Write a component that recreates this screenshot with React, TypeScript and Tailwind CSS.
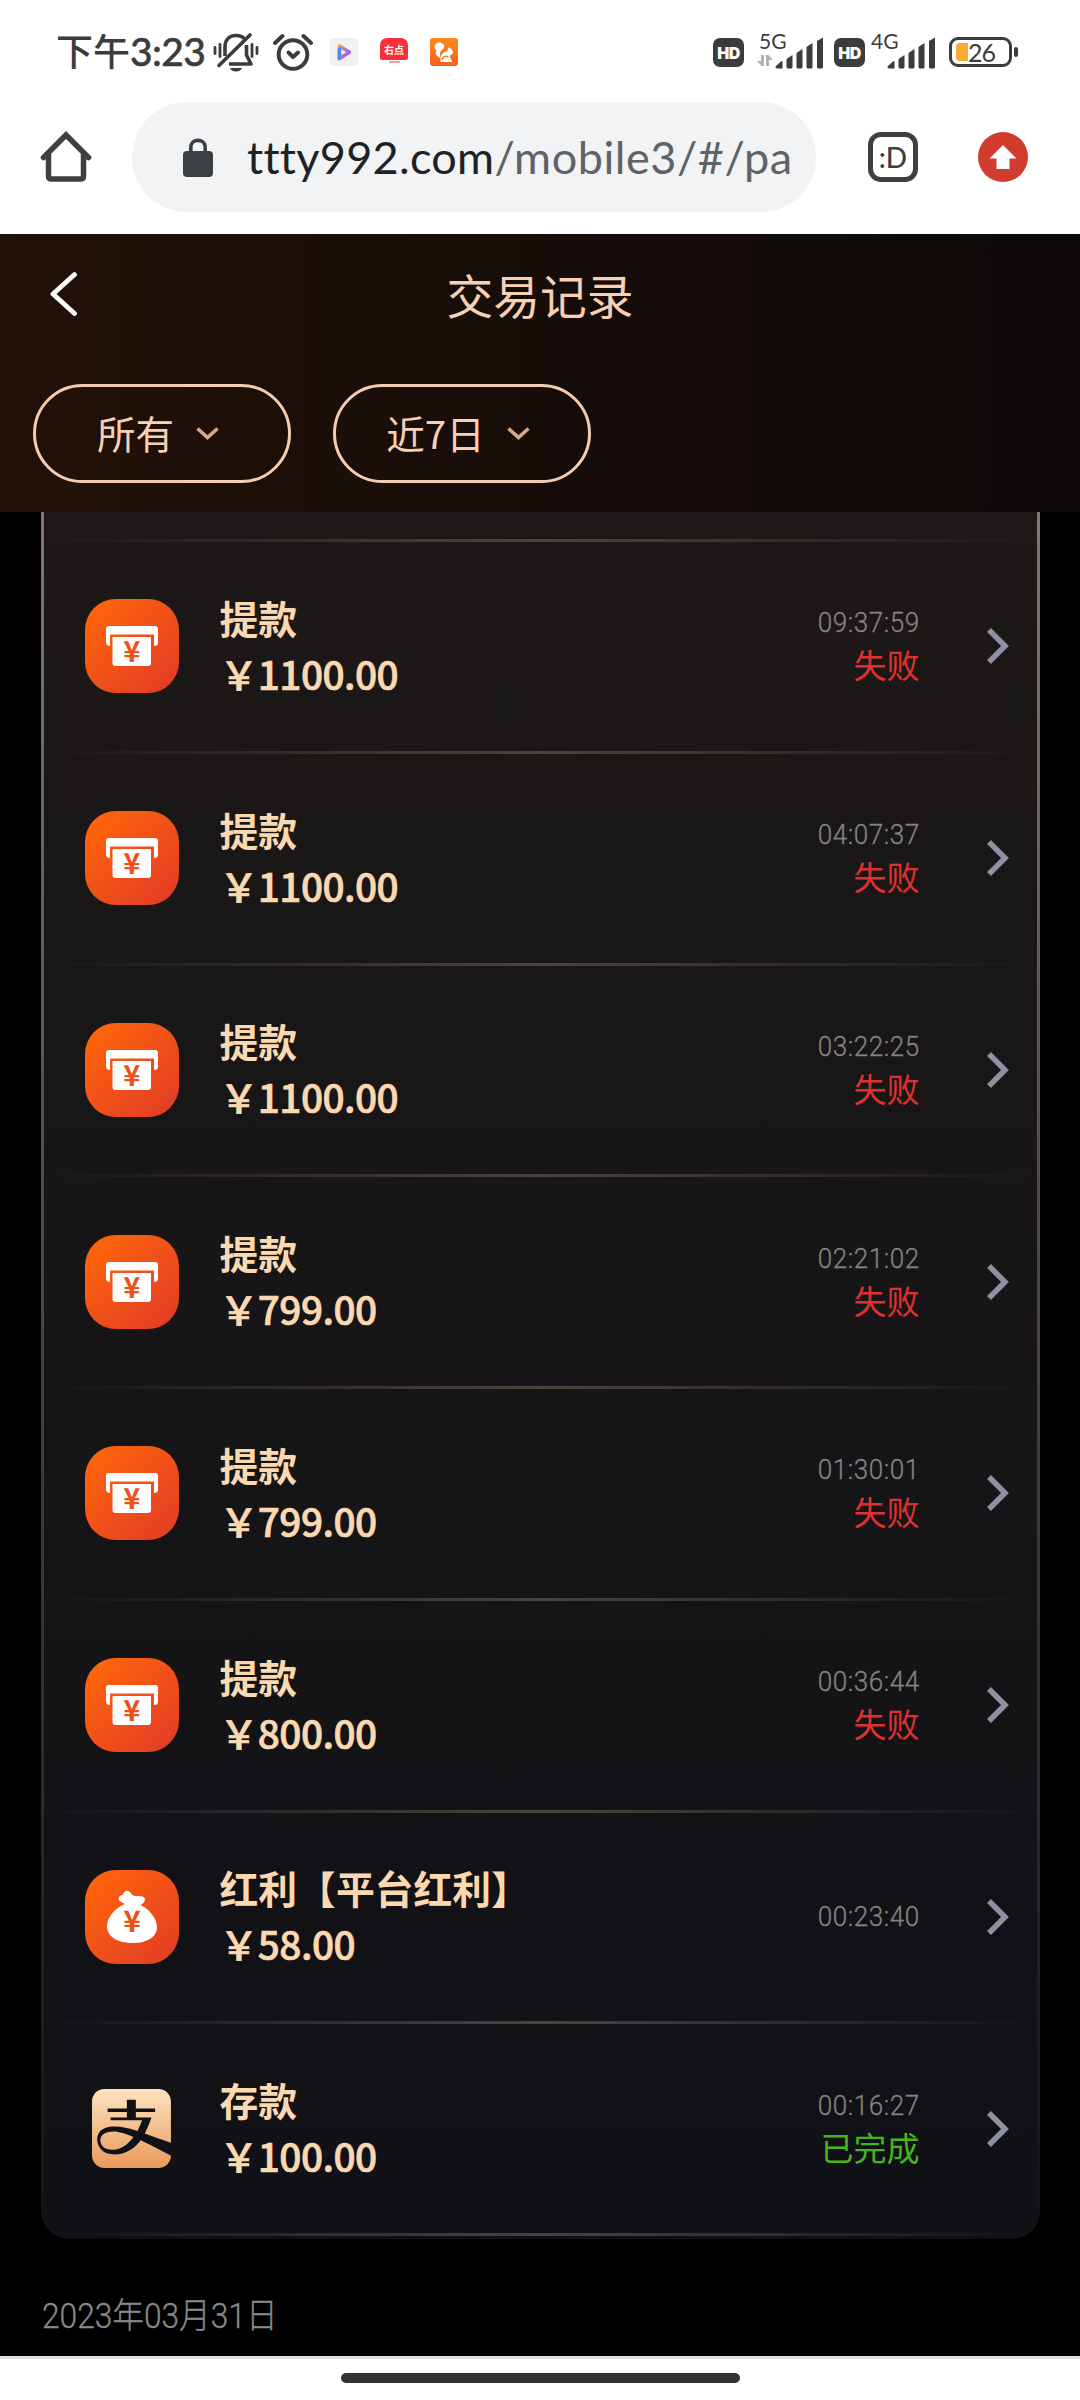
import { FaAlipay } from "react-icons/fa";

type RecordItem = {
  kind: "withdraw" | "bonus" | "deposit";
  title: string;
  amount: string;
  time: string;
  status?: "失败" | "已完成";
};

const records: RecordItem[] = [
  { kind: "withdraw", title: "提款", amount: "1100.00", time: "09:37:59", status: "失败" },
  { kind: "withdraw", title: "提款", amount: "1100.00", time: "04:07:37", status: "失败" },
  { kind: "withdraw", title: "提款", amount: "1100.00", time: "03:22:25", status: "失败" },
  { kind: "withdraw", title: "提款", amount: "799.00", time: "02:21:02", status: "失败" },
  { kind: "withdraw", title: "提款", amount: "799.00", time: "01:30:01", status: "失败" },
  { kind: "withdraw", title: "提款", amount: "800.00", time: "00:36:44", status: "失败" },
  { kind: "bonus", title: "红利【平台红利】", amount: "58.00", time: "00:23:40" },
  { kind: "deposit", title: "存款", amount: "100.00", time: "00:16:27", status: "已完成" },
];

const BellOff = () => (
  <svg className="w-[46px] h-[40px]" viewBox="0 0 46 40" fill="none" stroke="#3c3c3c" strokeWidth="3.6">
    <path d="M12 24V15C12 8 16 3.500 23 3.500C27 3.500 30 5 31.500 7" />
    <path d="M33.500 13V23L38 32H16" strokeLinejoin="round" />
    <path d="M6 33.500L37 3" strokeLinecap="round" />
    <path d="M17 36H29C28 38.500 26 39.500 23 39.500C20 39.500 18 38.500 17 36Z" fill="#3c3c3c" stroke="none" />
    <path d="M2 15.500V21.500M7 12.500V24.500M39 12.500V24.500M44 15.500V21.500" strokeWidth="2.800" strokeLinecap="round" />
  </svg>
);

const Alarm = () => (
  <svg className="w-[40px] h-[38px]" viewBox="0 0 40 38" fill="none" stroke="#3c3c3c" strokeLinecap="round" strokeLinejoin="round">
    <circle cx="20" cy="21.500" r="14.300" strokeWidth="4" />
    <path d="M15.500 19.500L20 24L25 19.500" strokeWidth="4" />
    <path d="M2 10L9.500 3M38 10L30.500 3" strokeWidth="4" />
  </svg>
);

const Signal = () => (
  <svg className="w-[49px] h-[32px]" viewBox="0 0 49 32" fill="#3c3c3c">
    <path d="M0.500 29.500L6.500 24Q7.500 24 7.500 25V31.500H2Q0.500 31.500 0.500 29.500Z" />
    <path d="M11.500 22L17.500 18V30Q17.500 31.500 16 31.500H13Q11.500 31.500 11.500 30Z" />
    <path d="M21.500 16L27.500 12V30Q27.500 31.500 26 31.500H23Q21.500 31.500 21.500 30Z" />
    <path d="M31.500 10L37.500 6V30Q37.500 31.500 36 31.500H33Q31.500 31.500 31.500 30Z" />
    <path d="M42 4L48 0.500V30Q48 31.500 46.500 31.500H43.500Q42 31.500 42 30Z" />
  </svg>
);

const HdBadge = () => (
  <span className="flex items-center justify-center w-[31px] h-[29px] rounded-[7px] bg-[#3c3c3c] text-white text-[16px] leading-none font-black font-['Inter',sans-serif] tracking-[-0.5px]">
    HD
  </span>
);

const StatusBar = () => (
  <div className="flex items-start h-[102px] pl-[56px] text-[#3c3c3c]">
    <div className="flex items-baseline w-[157px] mt-[24px] whitespace-nowrap leading-[52px]">
      <span className="text-[37px] font-medium font-['Noto_Sans_CJK_SC',sans-serif]">下午</span>
      <span className="text-[39px] font-medium font-['Lato',sans-serif] tracking-[-0.6px] [-webkit-text-stroke:0.5px_#3c3c3c]">3:23</span>
    </div>
    <div className="mt-[32px]">
      <BellOff />
    </div>
    <div className="ml-[14px] mt-[33px]">
      <Alarm />
    </div>
    <svg className="ml-[17px] mt-[38px] w-[28px] h-[28px]" viewBox="0 0 28 28">
      <defs>
        <linearGradient id="play" x1="0" y1="0" x2="1" y2="1">
          <stop offset="0" stopColor="#f3a04a" />
          <stop offset="0.5" stopColor="#a56be0" />
          <stop offset="1" stopColor="#c05ad8" />
        </linearGradient>
      </defs>
      <rect width="28" height="28" rx="3" fill="#f1f1f2" />
      <path d="M9.500 8L19.500 14.300L9.500 20.500Z" fill="none" stroke="url(#play)" strokeWidth="3.500" strokeLinejoin="round" />
      <path d="M9.300 11V20.500" stroke="#4d8df0" strokeWidth="3.500" strokeLinecap="round" />
    </svg>
    <div className="ml-[22px] mt-[38px] w-[28px] h-[28px] flex flex-col items-center overflow-hidden">
      <span className="w-full h-[22px] rounded-t-[7px] rounded-b-[2px] bg-[#f8303c] text-white text-[10px] leading-[23px] text-center font-bold font-['Noto_Sans_CJK_SC',sans-serif]">
        右点
      </span>
      <span className="mt-[1px] w-[11px] h-[2px] bg-[#f3a0a4]" />
    </div>
    <svg className="ml-[22px] mt-[38px] w-[28px] h-[28px]" viewBox="0 0 28 28">
      <defs>
        <linearGradient id="uc" x1="0" y1="0" x2="0" y2="1">
          <stop offset="0" stopColor="#fb8a1e" />
          <stop offset="1" stopColor="#f7601a" />
        </linearGradient>
      </defs>
      <rect width="28" height="28" rx="3" fill="url(#uc)" />
      <path d="M4.500 10C4 6 8 3.500 11.500 5C15 6.500 15 10 12 12C9.500 14 9.500 17 11 20C6.500 19 4.500 15 6.500 12Z" fill="#fff" />
      <path d="M19 9C20.500 11 23.500 12 23 15C22.500 16.500 20.500 16.500 20 17.500C20.500 20 21.500 22 22 24H10.500C10 18 12 14.500 17 13Z" fill="#fff" />
      <path d="M12 22C13 18.500 16 17 18.500 19M21.500 18V21M20 19.500H23" stroke="#f7701c" strokeWidth="1.300" fill="none" />
    </svg>

    <div className="ml-[255px] mt-[38px]">
      <HdBadge />
    </div>
    <div className="ml-[13px] mt-[32px] w-[18px]">
      <span className="block pl-[2px] text-[21px] leading-[18px] h-[23px] font-['Lato',sans-serif]">5G</span>
      <svg className="w-[16px] h-[11px]" viewBox="0 0 16 11" fill="#b3b3b3">
        <path d="M4 0H7V11H4.500L0 6H4ZM9 11V0H11.500L16 5H12V11Z" />
      </svg>
    </div>
    <div className="mt-[37px]">
      <Signal />
    </div>
    <div className="ml-[10px] mt-[38px]">
      <HdBadge />
    </div>
    <div className="ml-[6px] mt-[32px] w-[16px]">
      <span className="block text-[21px] leading-[18px] font-['Lato',sans-serif]">4G</span>
    </div>
    <div className="mt-[37px]">
      <Signal />
    </div>
    <div className="ml-[13px] mt-[37px] flex items-center">
      <div className="flex items-center w-[63px] h-[30px] rounded-[9px] border-[3px] border-[#3c3c3c] pl-[4px]">
        <span className="w-[12px] h-[18px] rounded-l-[4px] bg-[#f6ab37]" />
        <span className="text-[25px] leading-none font-['Lato',sans-serif] tracking-[-1px]">26</span>
      </div>
      <span className="ml-[2px] w-[4px] h-[10px] rounded-[2px] bg-[#3c3c3c]" />
    </div>
  </div>
);

const AddressBar = () => (
  <div className="flex items-center h-[110px] mb-[22px]">
    <svg className="ml-[40px] w-[52px] h-[52px]" viewBox="0 0 52 52" fill="none" stroke="#3c4043" strokeWidth="5.500">
      <path d="M8.500 23V45Q8.500 48 11.500 48H40.500Q43.500 48 43.500 45V23" />
      <path d="M3.500 26.500L26 4L48.500 26.500" strokeLinecap="round" />
    </svg>
    <div className="ml-[40px] flex items-center w-[684px] h-[110px] rounded-full bg-[#f1f3f5] pl-[51px] overflow-hidden">
      <svg className="w-[30px] h-[39px]" viewBox="0 0 30 39">
        <rect y="13" width="30" height="26" rx="4" fill="#3c4043" />
        <path d="M7.800 14V9.500C7.800 0 22.200 0 22.200 9.500V14" fill="none" stroke="#3c4043" strokeWidth="3.600" />
      </svg>
      <div className="ml-[34px] flex whitespace-nowrap text-[45px] leading-[60px] font-['Lato',sans-serif]">
        <span className="text-[#202124] tracking-[0.3px]">ttty992.com</span>
        <span className="text-[#5f6368] tracking-[0.55px]">/mobile3/#/pa</span>
      </div>
    </div>
    <div className="ml-[52px] flex items-center justify-center w-[50px] h-[50px] rounded-[13px] border-[5px] border-[#3c4043] text-[#3c4043] text-[28px] leading-none font-medium font-['Lato',sans-serif]">
      :D
    </div>
    <svg className="ml-[60px] w-[50px] h-[50px]" viewBox="0 0 50 50">
      <circle cx="25" cy="25" r="25" fill="#d23c2e" />
      <path d="M25 13L38.500 26.500H31.500V37H18.500V26.500H11.500Z" fill="#fff" />
    </svg>
  </div>
);

const FilterButton = ({ label }: { label: string }) => (
  <button className="flex items-center justify-center gap-[22px] w-[258px] h-[99px] pr-[8px] rounded-full border-[3px] border-[#f4ccb0] text-[#f8d0b4] text-[38.5px] leading-[56px]">
    <span className="-mt-[3px]">{label}</span>
    <svg className="w-[23px] h-[13px]" viewBox="0 0 23 13" fill="none" stroke="#d9a886" strokeWidth="3.600">
      <path d="M1.500 1.500L11.500 10.500L21.500 1.500" />
    </svg>
  </button>
);

const OrangeTile = ({ kind }: { kind: "withdraw" | "bonus" }) => (
  <svg className="w-[94px] h-[94px]" viewBox="0 0 94 94">
    <defs>
      <linearGradient id="tile" x1="0" y1="0" x2="1" y2="1">
        <stop offset="0.1" stopColor="#fd640c" />
        <stop offset="0.95" stopColor="#e23c26" />
      </linearGradient>
    </defs>
    <rect width="94" height="94" rx="31" fill="url(#tile)" />
    {kind === "withdraw" ? (
      <>
        <path d="M24 27H70Q73 27 73 30V44Q73 47 69 47V35.500H25V47Q21 47 21 43V30Q21 27 24 27Z" fill="#fff" />
        <path d="M27.500 38H66V64Q66 67 63 67H30.500Q27.500 67 27.500 64Z" fill="#fff" />
        <text x="46.800" y="62.500" textAnchor="middle" fontSize="29" fontWeight="700" fill="#ee5019" fontFamily="Noto Sans CJK SC">¥</text>
      </>
    ) : (
      <>
        <path d="M40 34C36 32 32 30 34.500 26.500C36 24.500 38 26 38.500 23.500C39.500 19.500 45 20 46 23.500C48 27 51 25.500 54 26C60 26 61 29.500 59 32C58 34 56 34 55.500 35C64 39 72 48 72 57C72 67 62 73 48 73C33 73 22 67 22 56C22 47 31 37 40 34Z" fill="#fff" />
        <text x="47" y="62" textAnchor="middle" fontSize="30" fontWeight="700" fill="#ee5019" fontFamily="Noto Sans CJK SC">¥</text>
      </>
    )}
  </svg>
);

const AlipayTile = () => (
  <div className="flex items-center justify-center w-[94px] h-[94px]">
    <svg className="w-0 h-0">
      <defs>
        <linearGradient id="gold" x1="0" y1="0" x2="0" y2="1">
          <stop offset="0" stopColor="#fce3c2" />
          <stop offset="1" stopColor="#e99a59" />
        </linearGradient>
      </defs>
    </svg>
    <FaAlipay className="w-[79px] h-[91px] shrink-0" fill="url(#gold)" />
  </div>
);

const Divider = () => (
  <div className="h-[3px] bg-linear-to-r from-transparent via-[#4b433c] to-transparent" />
);

const Row = ({ item }: { item: RecordItem }) => (
  <>
    <div className="flex items-center h-[208.75px] pl-[41px] pr-[27px]">
      {item.kind === "deposit" ? <AlipayTile /> : <OrangeTile kind={item.kind} />}
      <div className="ml-[41px] -mt-[3px] flex-1 text-[#fbd9b0] text-[38.8px] leading-[56px]">
        <div className="font-bold">{item.title}</div>
        <div className="font-medium tracking-[-0.55px] [-webkit-text-stroke:0.7px_#fbd9b0]">￥{item.amount}</div>
      </div>
      <div className="flex flex-col items-end mr-[67px]">
        <span className="origin-right scale-x-[0.93] text-[28px] leading-[40px] tracking-[0.6px] -mr-[0.6px] text-[#858382] font-light [-webkit-text-stroke:0.3px_#858382] font-['Roboto',sans-serif]">
          {item.time}
        </span>
        {item.status && (
          <span
            className={
              item.status === "失败"
                ? "-mt-[2px] mb-[2px] text-[33px] leading-[46px] text-[#e13030]"
                : "-mt-[2px] mb-[2px] text-[33px] leading-[46px] text-[#46b41e]"
            }
          >
            {item.status}
          </span>
        )}
      </div>
      <svg className="w-[23px] h-[36px]" viewBox="0 0 23 36" fill="none" stroke="#8f91a3" strokeWidth="5.500">
        <path d="M2 2L18 18L2 34" />
      </svg>
    </div>
    <Divider />
  </>
);

export default function App() {
  return (
    <div className="flex flex-col w-[1080px] h-[2400px] overflow-hidden bg-white font-['Noto_Sans_CJK_SC',sans-serif]">
      <StatusBar />
      <AddressBar />

      <header className="h-[278px] shrink-0 bg-linear-to-r from-[#221108] via-[#160d09] to-[#0c0908]">
        <div className="flex items-center h-[124px] pl-[49px] pr-[77px]">
          <svg className="w-[28px] h-[46px] -mt-[5px]" viewBox="0 0 28 46" fill="none" stroke="#fff" strokeWidth="4.800">
            <path d="M25.500 3.500L4 23L25.500 42.500" strokeLinecap="round" strokeLinejoin="round" />
          </svg>
          <h1 className="flex-1 -mt-[5px] text-center text-[46.75px] leading-[64px] text-[#f8d0b4]">交易记录</h1>
        </div>
        <div className="flex gap-[42px] pl-[33px] pt-[26px]">
          <FilterButton label="所有" />
          <FilterButton label="近7日" />
        </div>
      </header>

      <main className="flex-1 overflow-hidden bg-black">
        {/* side borders fade out towards the bottom of the card */}
        <div className="mx-auto w-[999px] px-[3px] rounded-b-[28px] overflow-hidden bg-linear-to-b from-[#83776e] to-[#111217]">
          <div className="pb-[3px] bg-linear-to-b from-[#1c1817] to-[#101116] rounded-b-[26px]">
            <div className="h-[27px]" />
            <Divider />
            {records.map((item) => (
              <Row key={item.time} item={item} />
            ))}
          </div>
        </div>
        <div className="mt-[54px] ml-[42px] flex origin-left scale-x-[0.905] text-[35px] leading-[48px] text-[#8a8a8a] font-light [-webkit-text-stroke:0.3px_#8a8a8a] font-['Roboto','Noto_Sans_CJK_SC',sans-serif]">
          2023年03月31日
        </div>
      </main>

      <footer className="h-[44px] shrink-0 border-t-[3px] border-[#dedede] pt-[14px] bg-white">
        <div className="mx-auto w-[399px] h-[10px] rounded-full bg-[#333]" />
      </footer>
    </div>
  );
}
